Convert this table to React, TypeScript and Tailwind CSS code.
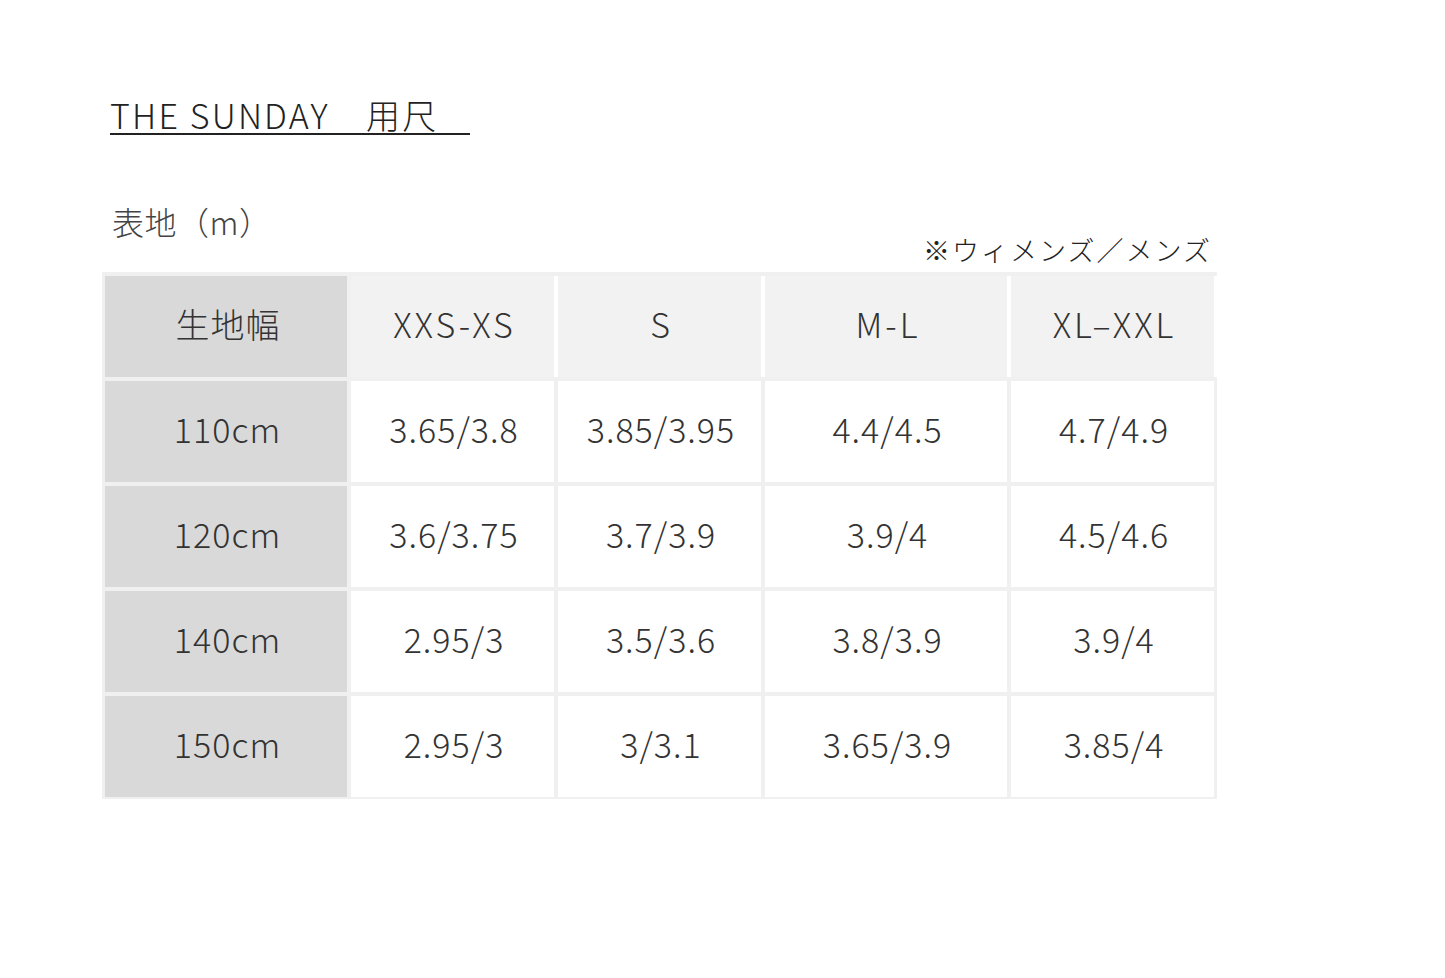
import React from "react";

const font = { fontFamily: '"Noto Sans CJK JP", "Noto Sans", sans-serif' };

const rows: string[][] = [
  ["110cm", "3.65/3.8", "3.85/3.95", "4.4/4.5", "4.7/4.9"],
  ["120cm", "3.6/3.75", "3.7/3.9", "3.9/4", "4.5/4.6"],
  ["140cm", "2.95/3", "3.5/3.6", "3.8/3.9", "3.9/4"],
  ["150cm", "2.95/3", "3/3.1", "3.65/3.9", "3.85/4"],
];

const widths = ["w-[242px]", "w-[203px]", "w-[203px]", "w-[242px]", "w-[203px]"];

export default function App() {
  return (
    <div className="min-h-[978px] w-full bg-white" style={font}>
      <div className="flex flex-col pl-[102px] pt-[95px]">
        <div className="pl-[8px]">
          <span className="inline-block w-[360px] h-[40px] border-b-2 border-[#222] text-[34px] leading-[40px] font-light text-[#222] tracking-[2.2px] whitespace-pre">
            THE SUNDAY　用尺
          </span>
        </div>
        <div className="mt-[67px] flex h-[64px] w-[1115px] justify-between">
          <div className="self-start pl-[10px] text-[32px] leading-[38px] font-light text-[#444] tracking-[0.5px]">
            表地（m）
          </div>
          <div className="self-end pr-[5px] text-[27px] leading-[32px] font-light text-[#222] tracking-[2px]">
            ※ウィメンズ／メンズ
          </div>
        </div>
        <div className="mt-[6px] w-[1115px] bg-[#f0f0f0] pt-[4px] pb-[2px] pl-[3px] pr-[3px] flex flex-col gap-[4px] text-[34px] font-light text-[#333]">
          <div className="flex h-[101px] -mr-[3px] tracking-[3px]">
            <div className="w-[242px] h-full bg-[#d9d9d9] flex items-center justify-center pb-[7px] pl-[4px] tracking-[1px]">生地幅</div>
            <div className="w-[4px] h-full" />
            <div className="w-[207px] h-full bg-[#f2f2f2] border-r-4 border-white flex items-center justify-center pb-[7px] pl-[4px]">XXS-XS</div>
            <div className="w-[207px] h-full bg-[#f2f2f2] border-r-4 border-white flex items-center justify-center pb-[7px] pl-[4px]">S</div>
            <div className="w-[246px] h-full bg-[#f2f2f2] border-r-4 border-white flex items-center justify-center pb-[7px] pl-[4px]">M-L</div>
            <div className="w-[206px] h-full bg-[#f2f2f2] border-r-[3px] border-white flex items-center justify-center pb-[7px] pl-[4px]">XL–XXL</div>
          </div>
          {rows.map((r, i) => (
            <div key={i} className="flex h-[101px] gap-[4px] tracking-[1px]">
              {r.map((c, j) => (
                <div
                  key={j}
                  className={`${widths[j]} h-full flex items-center justify-center pb-[7px] pl-[3px] ${j === 0 ? "bg-[#d9d9d9]" : "bg-white"}`}
                >
                  {c}
                </div>
              ))}
            </div>
          ))}
        </div>
      </div>
    </div>
  );
}
